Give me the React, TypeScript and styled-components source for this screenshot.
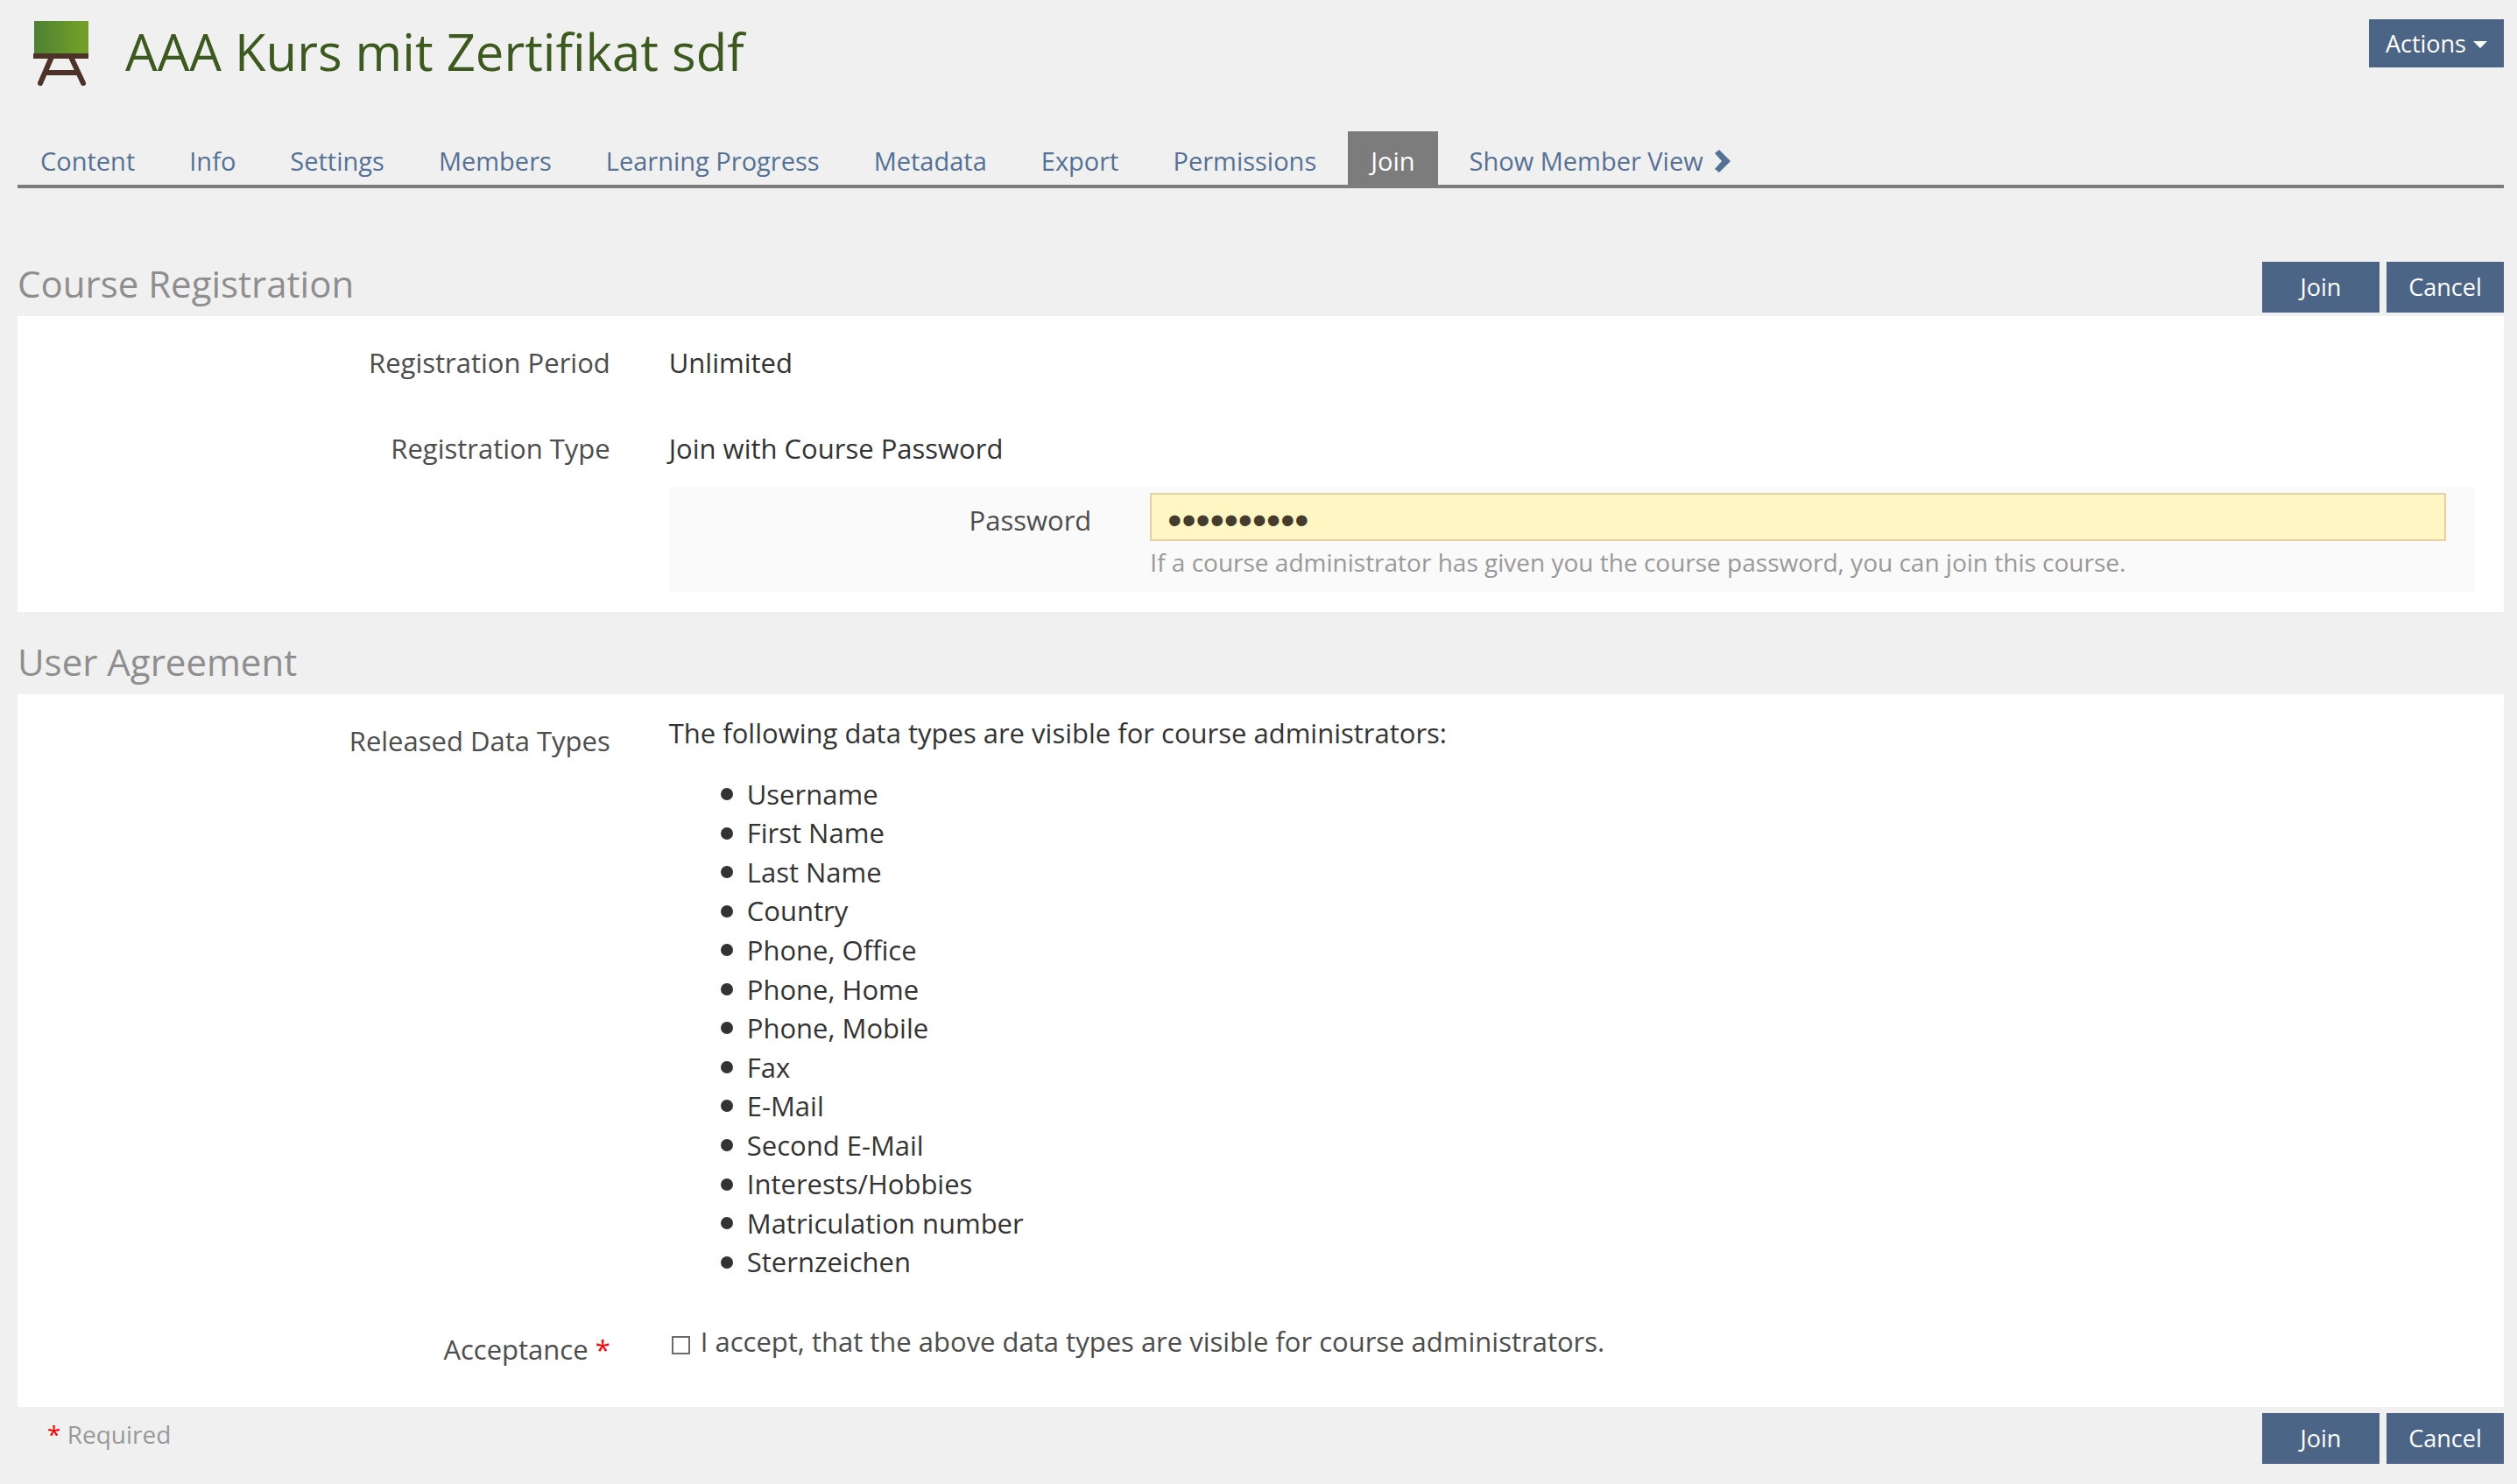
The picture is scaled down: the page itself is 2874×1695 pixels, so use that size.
import React from "react";
import styled, { createGlobalStyle } from "styled-components";

const GlobalStyle = createGlobalStyle`
  *, *::before, *::after { box-sizing: border-box; }
  body {
    margin: 0;
    background: #f0f0f0;
    color: #333333;
    font-family: "Open Sans", "Noto Sans", sans-serif;
    font-size: 31px;
    line-height: 1.438;
  }
`;

const Page = styled.div`
  padding: 22px 15px 24px 20px;
`;

const Header = styled.header`
  display: flex;
  align-items: flex-start;
  justify-content: space-between;
  height: 128px;
`;

const TitleGroup = styled.div`
  display: flex;
  align-items: flex-start;
  gap: 42px;
  padding-left: 19px;
`;

const EaselIcon = styled.svg`
  display: block;
  width: 62px;
  height: 78px;
  overflow: visible;
`;

const Title = styled.h1`
  margin: 0;
  font-size: 58px;
  line-height: 74px;
  font-weight: 400;
  color: #3c591f;
`;

const Button = styled.button<{ $compact?: boolean }>`
  display: inline-flex;
  align-items: center;
  justify-content: center;
  gap: 8px;
  min-width: 134px;
  height: ${(p) => (p.$compact ? 55 : 58)}px;
  padding: 0 ${(p) => (p.$compact ? 19 : 25)}px;
  border: 0;
  background: #4c6586;
  color: #ffffff;
  font-family: inherit;
  font-size: 27px;
  line-height: 40px;
  cursor: pointer;
`;

const Caret = styled.span`
  width: 0;
  height: 0;
  margin-top: 3px;
  border-top: 8px solid currentColor;
  border-left: 8px solid transparent;
  border-right: 8px solid transparent;
`;

const Tabs = styled.nav`
  display: flex;
  gap: 10px;
  height: 65px;
  border-bottom: 4px solid #7c7c7c;
`;

const Tab = styled.a<{ $active?: boolean }>`
  display: flex;
  align-items: center;
  gap: 12px;
  padding: 7px 26px 0;
  font-size: 29px;
  line-height: 42px;
  text-decoration: none;
  color: ${(p) => (p.$active ? "#ffffff" : "#557196")};
  background: ${(p) => (p.$active ? "#7c7c7c" : "transparent")};
`;

const ChevronIcon = styled.svg`
  display: block;
  width: 20px;
  height: 26px;
`;

const Form = styled.form`
  margin-top: 76px;
`;

const SectionHeader = styled.div`
  display: flex;
  align-items: flex-end;
  justify-content: space-between;
  padding-bottom: 4px;
`;

const SectionTitle = styled.h2`
  margin: 0;
  font-size: 42px;
  line-height: 66px;
  font-weight: 400;
  color: #8e8e8e;
`;

const Actions = styled.div`
  display: flex;
  gap: 8px;
`;

const Panel = styled.section<{ $last?: boolean }>`
  display: flex;
  flex-direction: column;
  gap: ${(p) => (p.$last ? 46 : 53)}px;
  margin-bottom: ${(p) => (p.$last ? 7 : 24)}px;
  padding: ${(p) => (p.$last ? "22px 0 43px" : "31px 0 23px")};
  background: #ffffff;
`;

const Row = styled.div`
  display: grid;
  grid-template-columns: 1fr 3fr;
`;

const LabelCell = styled.div<{ $drop?: boolean }>`
  padding: ${(p) => (p.$drop ? 9 : 0)}px 33px 0;
  text-align: right;
  color: #4d4d4d;
`;

const ValueCell = styled.div`
  padding: 0 33px 0 34px;
`;

const Required = styled.span`
  color: #ff0000;
`;

const SubForm = styled.div`
  margin-top: 22px;
  padding: 7px 0 13px;
  background: #fafafa;
`;

const PasswordInput = styled.input`
  display: block;
  width: 100%;
  height: 55px;
  padding: 6px 18px 0;
  border: 2px solid #e8d0a4;
  border-radius: 0;
  outline: 0;
  background: #fff6c4;
  color: #443c2c;
  font-family: "Liberation Sans", Arial, sans-serif;
  font-size: 46px;
  line-height: 41px;
`;

const Byline = styled.div`
  margin-top: 4px;
  font-size: 28px;
  line-height: 41px;
  color: #999999;
`;

const DataList = styled.ul`
  margin: 25px 0 0;
  padding: 0 0 0 59px;
  list-style: none;
`;

const DataItem = styled.li`
  display: flex;
  align-items: center;
  gap: 16px;

  &::before {
    content: "";
    width: 14px;
    height: 14px;
    border-radius: 50%;
    background: #333333;
  }
`;

const CheckLabel = styled.label`
  display: flex;
  align-items: center;
  gap: 12px;
  padding-left: 3px;
  color: #4d4d4d;
`;

const Checkbox = styled.input`
  appearance: none;
  width: 21px;
  height: 21px;
  margin: 9px 0 0;
  border: 2px solid #6c6c6c;
  background: #ffffff;
`;

const Footer = styled.footer`
  display: flex;
  align-items: flex-start;
  justify-content: space-between;
`;

const RequiredNote = styled.div`
  padding-left: 34px;
  font-size: 28px;
  line-height: 48px;
  color: #999999;
`;

const tabs = ["Content", "Info", "Settings", "Members", "Learning Progress", "Metadata", "Export", "Permissions"];

const dataTypes = [
  "Username",
  "First Name",
  "Last Name",
  "Country",
  "Phone, Office",
  "Phone, Home",
  "Phone, Mobile",
  "Fax",
  "E-Mail",
  "Second E-Mail",
  "Interests/Hobbies",
  "Matriculation number",
  "Sternzeichen",
];

function FormButtons() {
  return (
    <Actions>
      <Button type="button">Join</Button>
      <Button type="button">Cancel</Button>
    </Actions>
  );
}

export default function App() {
  return (
    <>
      <GlobalStyle />
      <Page>
        <Header>
          <TitleGroup>
            <EaselIcon viewBox="0 0 62 78" aria-hidden="true">
              <defs>
                <linearGradient id="board" x1="0" x2="1" y1="0" y2="0">
                  <stop offset="0" stopColor="#4e8034" />
                  <stop offset="0.85" stopColor="#709e29" />
                  <stop offset="1" stopColor="#739f28" />
                </linearGradient>
              </defs>
              <path d="M20 43 L7 73 M42 43 L56 73 M14 61 H48" stroke="#4c3229" strokeWidth="6" strokeLinecap="round" fill="none" />
              <rect x="0" y="2" width="62" height="38" fill="url(#board)" />
              <rect x="-1" y="39" width="63" height="6" fill="#4c3229" />
            </EaselIcon>
            <Title>AAA Kurs mit Zertifikat sdf</Title>
          </TitleGroup>
          <Button type="button" $compact>
            Actions
            <Caret />
          </Button>
        </Header>

        <Tabs>
          {tabs.map((name) => (
            <Tab key={name} href="#">{name}</Tab>
          ))}
          <Tab href="#" $active>Join</Tab>
          <Tab href="#">
            Show Member View
            <ChevronIcon viewBox="0 0 20 26" aria-hidden="true">
              <path d="M1 4 L6 0 L19 13 L6 26 L1 22 L9 13 Z" fill="#557196" />
            </ChevronIcon>
          </Tab>
        </Tabs>

        <Form>
          <SectionHeader>
            <SectionTitle>Course Registration</SectionTitle>
            <FormButtons />
          </SectionHeader>
          <Panel>
            <Row>
              <LabelCell>Registration Period</LabelCell>
              <ValueCell>Unlimited</ValueCell>
            </Row>
            <Row>
              <LabelCell>Registration Type</LabelCell>
              <ValueCell>
                Join with Course Password
                <SubForm>
                  <Row>
                    <LabelCell as="label" htmlFor="password" $drop>Password</LabelCell>
                    <ValueCell>
                      <PasswordInput id="password" type="password" defaultValue="coursepass" />
                      <Byline>If a course administrator has given you the course password, you can join this course.</Byline>
                    </ValueCell>
                  </Row>
                </SubForm>
              </ValueCell>
            </Row>
          </Panel>

          <SectionHeader>
            <SectionTitle>User Agreement</SectionTitle>
          </SectionHeader>
          <Panel $last>
            <Row>
              <LabelCell $drop>Released Data Types</LabelCell>
              <ValueCell>
                The following data types are visible for course administrators:
                <DataList>
                  {dataTypes.map((item) => (
                    <DataItem key={item}>{item}</DataItem>
                  ))}
                </DataList>
              </ValueCell>
            </Row>
            <Row>
              <LabelCell $drop>
                Acceptance <Required>*</Required>
              </LabelCell>
              <ValueCell>
                <CheckLabel>
                  <Checkbox type="checkbox" />
                  I accept, that the above data types are visible for course administrators.
                </CheckLabel>
              </ValueCell>
            </Row>
          </Panel>

          <Footer>
            <RequiredNote>
              <Required>*</Required> Required
            </RequiredNote>
            <FormButtons />
          </Footer>
        </Form>
      </Page>
    </>
  );
}
